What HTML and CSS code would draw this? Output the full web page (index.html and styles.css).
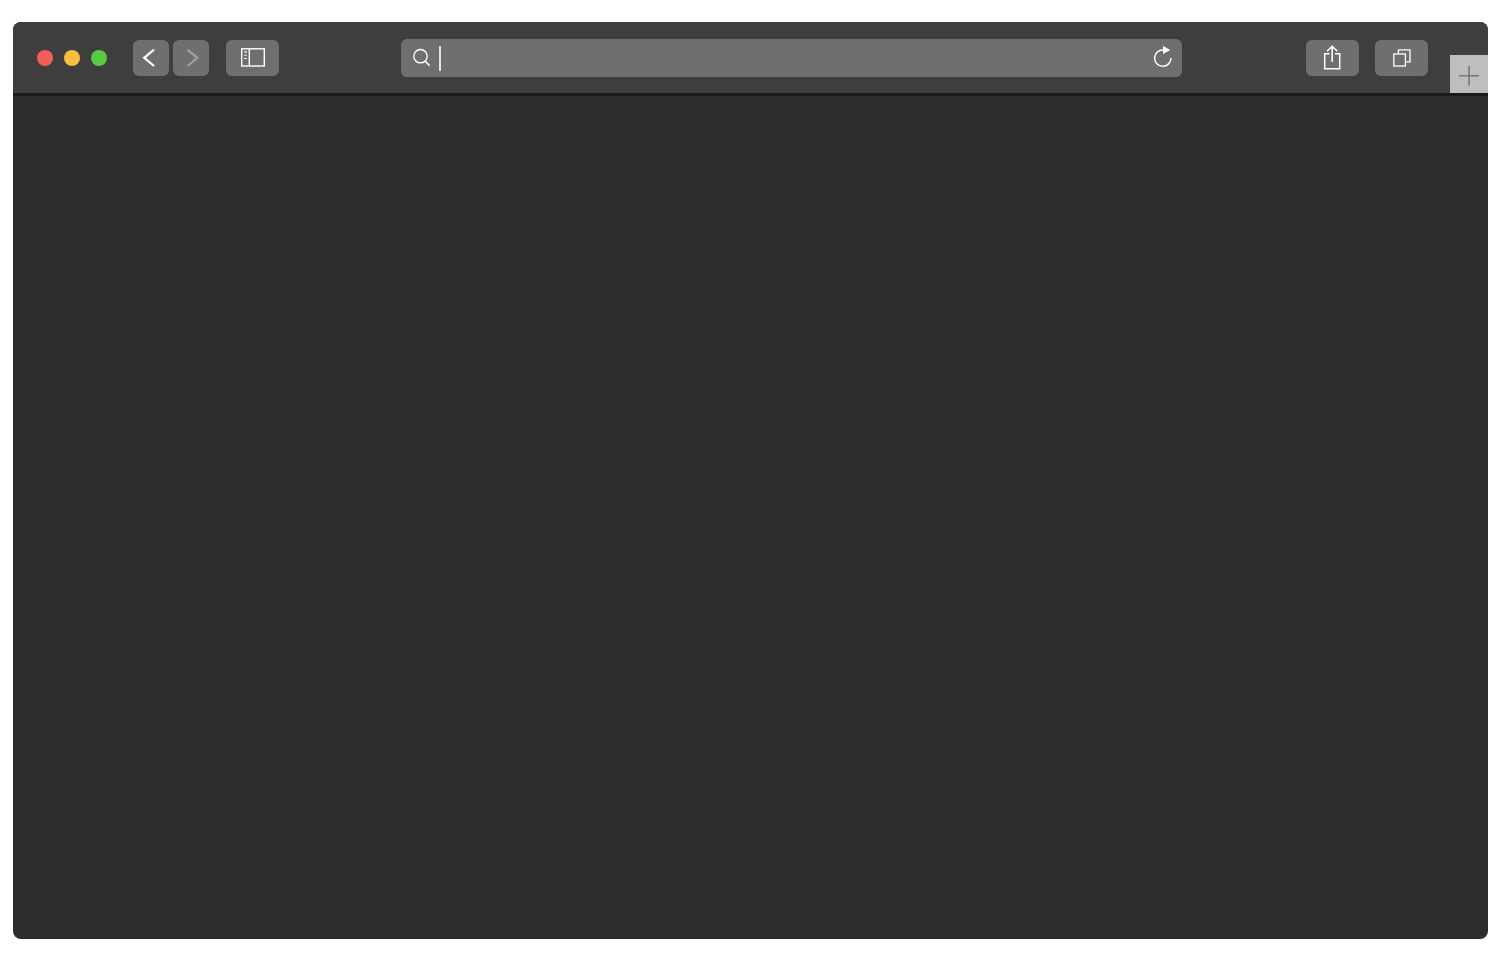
FILE: index.html
```html
<!DOCTYPE html>
<html lang="en">
<head>
    <meta charset="UTF-8">
    <meta name="viewport" content="width=device-width, initial-scale=1.0">
    <title>Browser window</title>
    <link rel="stylesheet" href="styles.css">
</head>
<body>
    <div class="window">
        <header class="toolbar">
            <div class="controls">
                <div class="lights">
                    <button type="button" class="light close" aria-label="Close"></button>
                    <button type="button" class="light minimize" aria-label="Minimize"></button>
                    <button type="button" class="light zoom" aria-label="Zoom"></button>
                </div>

                <nav class="history">
                    <button type="button" class="btn" aria-label="Back">
                        <svg width="36" height="36" viewBox="0 0 36 36"><path d="M21 9.7 L11.2 17.8 L21 26" stroke-width="2.2"/></svg>
                    </button>
                    <button type="button" class="btn forward" aria-label="Forward">
                        <svg width="36" height="36" viewBox="0 0 36 36"><path d="M14.5 9.7 L24.3 17.8 L14.5 26" stroke-width="2.2"/></svg>
                    </button>
                </nav>

                <button type="button" class="btn wide" aria-label="Show sidebar">
                    <svg width="53" height="36" viewBox="0 0 53 36">
                        <rect x="15.7" y="8.8" width="22.6" height="17.2" stroke-width="1.4"/>
                        <path d="M23.3 9 V26" stroke-width="1.4"/>
                        <path d="M18.2 11.9 H20.8 M18.2 15.2 H20.8 M18.2 18.5 H20.8" stroke-width="1.1"/>
                    </svg>
                </button>

                <form class="search">
                    <svg class="search-icon" width="18" height="20" viewBox="0 0 18 20">
                        <circle cx="7.5" cy="8.2" r="6.7" stroke-width="1.4"/>
                        <path d="M12 13 L16.7 17.8" stroke-width="1.6"/>
                    </svg>
                    <input type="text" class="search-input" aria-label="Search or enter website name">
                    <button type="button" class="reload" aria-label="Reload">
                        <svg width="20" height="24" viewBox="0 0 20 24">
                            <path d="M11.3 3.9 A8.2 8.2 0 1 0 19 12" stroke-width="1.5"/>
                            <path class="solid" d="M11 0 L18.3 4 L11 8 Z"/>
                        </svg>
                    </button>
                </form>

                <div class="actions">
                    <button type="button" class="btn wide" aria-label="Share">
                        <svg width="53" height="36" viewBox="0 0 53 36">
                            <path d="M23.5 13.8 H18.7 V28.8 H33.7 V13.8 H29" stroke-width="1.5"/>
                            <path d="M26.2 22 V7 M21.1 11.3 L26.2 6.3 L31.3 11.3" stroke-width="1.6"/>
                        </svg>
                    </button>
                    <button type="button" class="btn wide" aria-label="Show all tabs">
                        <svg width="53" height="36" viewBox="0 0 53 36">
                            <rect x="18.8" y="14" width="11.6" height="12" stroke-width="1.3"/>
                            <path d="M23.4 13.5 V9.8 H35 V21.8 H31" stroke-width="1.3"/>
                        </svg>
                    </button>
                </div>
            </div>

            <button type="button" class="new-tab" aria-label="New tab">
                <svg width="38" height="38" viewBox="0 0 38 38"><path d="M9 20.7 H29 M19 11 V30.5" stroke-width="1.6"/></svg>
            </button>
        </header>

        <main class="page"></main>
    </div>
</body>
</html>
```
FILE: styles.css
```css
* {
    box-sizing: border-box;
}

body {
    margin: 0;
    padding: 22px 12px 21px 13px;
    min-height: 100vh;
    display: flex;
    background: #fff;
    font-family: Inter, "Liberation Sans", sans-serif;
}

button {
    display: block;
    margin: 0;
    padding: 0;
    border: 0;
    background: none;
    cursor: pointer;
}

svg {
    display: block;
    fill: none;
    stroke: #fff;
}

.window {
    flex: 1;
    display: flex;
    flex-direction: column;
    border-radius: 8px;
    overflow: hidden;
    background: #2c2c2c;
}

.toolbar {
    display: flex;
    align-items: flex-end;
    background: #3e3e3e;
    border-bottom: 3px solid #1b1b1b;
}

.controls {
    flex: 1;
    display: flex;
    align-items: center;
    padding: 17px 22px 16px 24px;
}

.lights {
    display: flex;
    gap: 11px;
    margin-right: 26px;
}

.light {
    width: 16px;
    height: 16px;
    border-radius: 50%;
}

.close {
    background: #f35f58;
}

.minimize {
    background: #fabe3c;
}

.zoom {
    background: #57cb43;
}

.history {
    display: flex;
    gap: 4px;
    margin-right: 17px;
}

.btn {
    width: 36px;
    height: 36px;
    border-radius: 6px;
    background: #6f6f6f;
}

.btn.wide {
    width: 53px;
}

.forward svg {
    stroke: #a0a0a0;
}

.search {
    flex: 1;
    display: flex;
    align-items: center;
    height: 38px;
    margin: 0 124px 0 122px;
    padding: 0 10px 0 12px;
    border-radius: 6px;
    background: #6f6f6f;
}

.search-icon {
    margin-right: 8px;
}

/* the left border stands for the text cursor */
.search-input {
    flex: 1;
    min-width: 0;
    height: 25px;
    padding: 0 6px;
    border: 0;
    border-left: 2px solid #e2e2e2;
    background: none;
    color: #fff;
    font: inherit;
    outline: none;
}

.actions {
    display: flex;
    gap: 16px;
}

.new-tab {
    width: 38px;
    height: 38px;
    background: #bebebe;
}

.new-tab svg {
    stroke: #777;
}

.solid {
    fill: #fff;
    stroke: none;
}

.page {
    flex: 1;
}
```
